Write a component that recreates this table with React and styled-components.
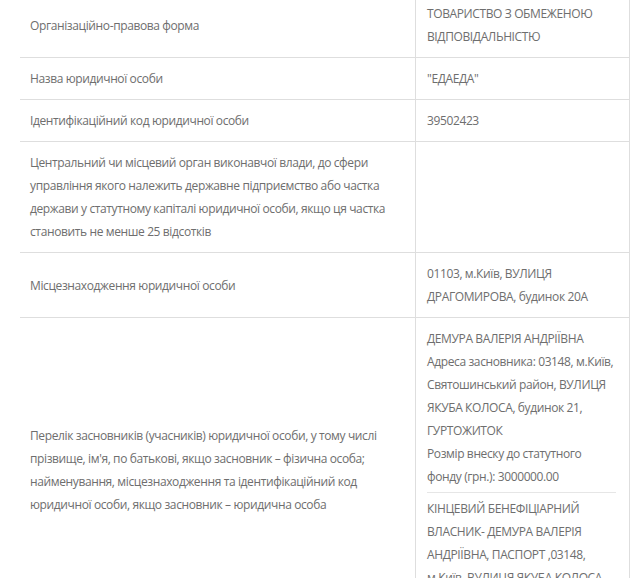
import React from "react";
import styled, { createGlobalStyle } from "styled-components";

const GlobalStyle = createGlobalStyle`
  html, body {
    margin: 0;
    padding: 0;
    background: #fff;
    overflow: hidden;
  }
  body {
    font-family: "Open Sans", "Noto Sans", sans-serif;
  }
`;

const Page = styled.div`
  width: 640px;
  height: 578px;
  overflow: hidden;
  padding: 0 10px 0 20px;
  box-sizing: border-box;
`;

const Table = styled.table`
  width: 610px;
  margin-top: -7px;
  border-collapse: collapse;
  table-layout: fixed;
  font-size: 12px;
  letter-spacing: -0.38px;
  line-height: 23px;
  color: #6e6e6e;
`;

const Row = styled.tr`
  border-bottom: 1px solid #dedede;
`;

const Label = styled.td`
  width: 375px;
  padding: 9px 10px;
  vertical-align: middle;
  border-right: 1px solid #dedede;
`;

const Value = styled.td`
  padding: 9px 13px 9px 11px;
  vertical-align: middle;
  border-right: 1px solid #dedede;
`;

const Block = styled.div``;

const Divider = styled.hr`
  border: 0;
  border-top: 1px solid #e6e6e6;
  margin: 4px 0 4px 0;
`;

const rows = [
  { label: "Організаційно-правова форма", value: "ТОВАРИСТВО З ОБМЕЖЕНОЮ ВІДПОВІДАЛЬНІСТЮ" },
  { label: "Назва юридичної особи", value: "\"ЕДАЕДА\"" },
  { label: "Ідентифікаційний код юридичної особи", value: "39502423" },
  {
    label:
      "Центральний чи місцевий орган виконавчої влади, до сфери управління якого належить державне підприємство або частка держави у статутному капіталі юридичної особи, якщо ця частка становить не менше 25 відсотків",
    value: "",
  },
  { label: "Місцезнаходження юридичної особи", value: "01103, м.Київ, ВУЛИЦЯ ДРАГОМИРОВА, будинок 20А" },
];

const founders = [
  [
    "ДЕМУРА ВАЛЕРІЯ АНДРІЇВНА",
    "Адреса засновника: 03148, м.Київ, Святошинський район, ВУЛИЦЯ ЯКУБА КОЛОСА, будинок 21, ГУРТОЖИТОК",
    "Розмір внеску до статутного фонду (грн.): 3000000.00",
  ],
  [
    "КІНЦЕВИЙ БЕНЕФІЦІАРНИЙ ВЛАСНИК- ДЕМУРА ВАЛЕРІЯ АНДРІЇВНА, ПАСПОРТ ,03148, м.Київ, ВУЛИЦЯ ЯКУБА КОЛОСА, будинок 21, ГУРТОЖИТОК",
  ],
];

export default function App() {
  return (
    <Page>
      <GlobalStyle />
      <Table>
        <tbody>
          {rows.map((r, i) => (
            <Row key={i}>
              <Label>{r.label}</Label>
              <Value>{r.value}</Value>
            </Row>
          ))}
          <Row>
            <Label>
              Перелік засновників (учасників) юридичної особи, у тому числі прізвище, ім'я, по батькові, якщо
              засновник – фізична особа; найменування, місцезнаходження та ідентифікаційний код юридичної особи, якщо
              засновник – юридична особа
            </Label>
            <Value>
              {founders.map((f, i) => (
                <React.Fragment key={i}>
                  {i > 0 && <Divider />}
                  <Block>
                    {f.map((line, j) => (
                      <div key={j}>{line}</div>
                    ))}
                  </Block>
                </React.Fragment>
              ))}
            </Value>
          </Row>
        </tbody>
      </Table>
    </Page>
  );
}
